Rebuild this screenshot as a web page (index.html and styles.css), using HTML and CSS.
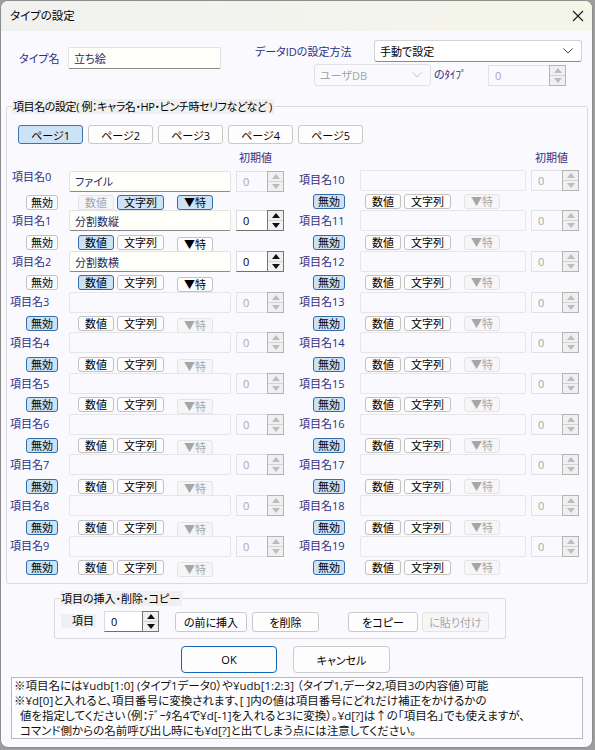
FILE: index.html
```html
<!doctype html>
<html>
    <head>
        <meta charset="utf-8">
        <link rel="stylesheet" href="styles.css">
    </head>
    <body>
    <div class="window">
        <div class="titlebar">
            <span class="title">タイプの設定</span>
            <svg class="close" width="12" height="12" viewBox="0 0 12 12"><path d="M1 1L11 11M11 1L1 11" stroke="#1a1a1a" stroke-width="1.1" fill="none"/></svg>
        </div>

        <div class="content">
            <div class="head1">
                <span class="lbl type-lbl">タイプ名</span>
                <input class="fld type-fld" type="text" value="立ち絵">
                <span class="lbl id-lbl">データIDの設定方法</span>
                <div class="select method"><span>手動で設定</span><svg width="10" height="6" viewBox="0 0 10 6"><path d="M0.5 0.5L5 5L9.5 0.5" stroke="#444" fill="none"/></svg></div>
            </div>
            <div class="head2">
                <div class="select db off"><span>ユーザDB</span><svg width="10" height="6" viewBox="0 0 10 6"><path d="M0.5 0.5L5 5L9.5 0.5" stroke="#c4c4c4" fill="none"/></svg></div>
                <span class="lbl kind-lbl">のﾀｲﾌﾟ</span>
                <div class="spin kind"><span class="val">0</span><span class="arr"><i class="up"></i><i class="dn"></i></span></div>
            </div>

            <div class="group items">
                <span class="legend">項目名の設定( 例：キャラ名・HP・ピンチ時セリフなどなど )</span>
                <div class="pages">
                    <button class="page on">ページ1</button>
                    <button class="page">ページ2</button>
                    <button class="page">ページ3</button>
                    <button class="page">ページ4</button>
                    <button class="page">ページ5</button>
                </div>
                <div class="cols">
                    <div class="col col-left">
                        <div class="init">初期値</div>

                        <div class="item first">
                            <span class="lbl name">項目名0</span>
                            <input class="fld" type="text" value="ファイル">
                            <div class="spin"><span class="val">0</span><span class="arr"><i class="up"></i><i class="dn"></i></span></div>
                            <div class="opts"><button class="btn">無効</button><button class="btn off">数値</button><button class="btn on">文字列</button><button class="btn on spec">▼特</button></div>
                        </div>
                        <div class="item">
                            <span class="lbl name">項目名1</span>
                            <input class="fld" type="text" value="分割数縦">
                            <div class="spin on"><span class="val">0</span><span class="arr"><i class="up"></i><i class="dn"></i></span></div>
                            <div class="opts"><button class="btn">無効</button><button class="btn on">数値</button><button class="btn">文字列</button><button class="btn spec">▼特</button></div>
                        </div>
                        <div class="item">
                            <span class="lbl name">項目名2</span>
                            <input class="fld" type="text" value="分割数横">
                            <div class="spin on"><span class="val">0</span><span class="arr"><i class="up"></i><i class="dn"></i></span></div>
                            <div class="opts"><button class="btn">無効</button><button class="btn on">数値</button><button class="btn">文字列</button><button class="btn spec">▼特</button></div>
                        </div>
                        <div class="item empty">
                            <span class="lbl name">項目名3</span>
                            <input class="fld" type="text" disabled>
                            <div class="spin"><span class="val">0</span><span class="arr"><i class="up"></i><i class="dn"></i></span></div>
                            <div class="opts"><button class="btn on">無効</button><button class="btn">数値</button><button class="btn">文字列</button><button class="btn off spec">▼特</button></div>
                        </div>
                        <div class="item empty">
                            <span class="lbl name">項目名4</span>
                            <input class="fld" type="text" disabled>
                            <div class="spin"><span class="val">0</span><span class="arr"><i class="up"></i><i class="dn"></i></span></div>
                            <div class="opts"><button class="btn on">無効</button><button class="btn">数値</button><button class="btn">文字列</button><button class="btn off spec">▼特</button></div>
                        </div>
                        <div class="item empty">
                            <span class="lbl name">項目名5</span>
                            <input class="fld" type="text" disabled>
                            <div class="spin"><span class="val">0</span><span class="arr"><i class="up"></i><i class="dn"></i></span></div>
                            <div class="opts"><button class="btn on">無効</button><button class="btn">数値</button><button class="btn">文字列</button><button class="btn off spec">▼特</button></div>
                        </div>
                        <div class="item empty">
                            <span class="lbl name">項目名6</span>
                            <input class="fld" type="text" disabled>
                            <div class="spin"><span class="val">0</span><span class="arr"><i class="up"></i><i class="dn"></i></span></div>
                            <div class="opts"><button class="btn on">無効</button><button class="btn">数値</button><button class="btn">文字列</button><button class="btn off spec">▼特</button></div>
                        </div>
                        <div class="item empty">
                            <span class="lbl name">項目名7</span>
                            <input class="fld" type="text" disabled>
                            <div class="spin"><span class="val">0</span><span class="arr"><i class="up"></i><i class="dn"></i></span></div>
                            <div class="opts"><button class="btn on">無効</button><button class="btn">数値</button><button class="btn">文字列</button><button class="btn off spec">▼特</button></div>
                        </div>
                        <div class="item empty">
                            <span class="lbl name">項目名8</span>
                            <input class="fld" type="text" disabled>
                            <div class="spin"><span class="val">0</span><span class="arr"><i class="up"></i><i class="dn"></i></span></div>
                            <div class="opts"><button class="btn on">無効</button><button class="btn">数値</button><button class="btn">文字列</button><button class="btn off spec">▼特</button></div>
                        </div>
                        <div class="item empty">
                            <span class="lbl name">項目名9</span>
                            <input class="fld" type="text" disabled>
                            <div class="spin"><span class="val">0</span><span class="arr"><i class="up"></i><i class="dn"></i></span></div>
                            <div class="opts"><button class="btn on">無効</button><button class="btn">数値</button><button class="btn">文字列</button><button class="btn off spec">▼特</button></div>
                        </div>
                    </div>

                    <div class="col col-right">
                        <div class="init">初期値</div>

                        <div class="item empty">
                            <span class="lbl name">項目名10</span>
                            <input class="fld" type="text" disabled>
                            <div class="spin"><span class="val">0</span><span class="arr"><i class="up"></i><i class="dn"></i></span></div>
                            <div class="opts"><button class="btn on">無効</button><button class="btn">数値</button><button class="btn">文字列</button><button class="btn off spec">▼特</button></div>
                        </div>
                        <div class="item empty">
                            <span class="lbl name">項目名11</span>
                            <input class="fld" type="text" disabled>
                            <div class="spin"><span class="val">0</span><span class="arr"><i class="up"></i><i class="dn"></i></span></div>
                            <div class="opts"><button class="btn on">無効</button><button class="btn">数値</button><button class="btn">文字列</button><button class="btn off spec">▼特</button></div>
                        </div>
                        <div class="item empty">
                            <span class="lbl name">項目名12</span>
                            <input class="fld" type="text" disabled>
                            <div class="spin"><span class="val">0</span><span class="arr"><i class="up"></i><i class="dn"></i></span></div>
                            <div class="opts"><button class="btn on">無効</button><button class="btn">数値</button><button class="btn">文字列</button><button class="btn off spec">▼特</button></div>
                        </div>
                        <div class="item empty">
                            <span class="lbl name">項目名13</span>
                            <input class="fld" type="text" disabled>
                            <div class="spin"><span class="val">0</span><span class="arr"><i class="up"></i><i class="dn"></i></span></div>
                            <div class="opts"><button class="btn on">無効</button><button class="btn">数値</button><button class="btn">文字列</button><button class="btn off spec">▼特</button></div>
                        </div>
                        <div class="item empty">
                            <span class="lbl name">項目名14</span>
                            <input class="fld" type="text" disabled>
                            <div class="spin"><span class="val">0</span><span class="arr"><i class="up"></i><i class="dn"></i></span></div>
                            <div class="opts"><button class="btn on">無効</button><button class="btn">数値</button><button class="btn">文字列</button><button class="btn off spec">▼特</button></div>
                        </div>
                        <div class="item empty">
                            <span class="lbl name">項目名15</span>
                            <input class="fld" type="text" disabled>
                            <div class="spin"><span class="val">0</span><span class="arr"><i class="up"></i><i class="dn"></i></span></div>
                            <div class="opts"><button class="btn on">無効</button><button class="btn">数値</button><button class="btn">文字列</button><button class="btn off spec">▼特</button></div>
                        </div>
                        <div class="item empty">
                            <span class="lbl name">項目名16</span>
                            <input class="fld" type="text" disabled>
                            <div class="spin"><span class="val">0</span><span class="arr"><i class="up"></i><i class="dn"></i></span></div>
                            <div class="opts"><button class="btn on">無効</button><button class="btn">数値</button><button class="btn">文字列</button><button class="btn off spec">▼特</button></div>
                        </div>
                        <div class="item empty">
                            <span class="lbl name">項目名17</span>
                            <input class="fld" type="text" disabled>
                            <div class="spin"><span class="val">0</span><span class="arr"><i class="up"></i><i class="dn"></i></span></div>
                            <div class="opts"><button class="btn on">無効</button><button class="btn">数値</button><button class="btn">文字列</button><button class="btn off spec">▼特</button></div>
                        </div>
                        <div class="item empty">
                            <span class="lbl name">項目名18</span>
                            <input class="fld" type="text" disabled>
                            <div class="spin"><span class="val">0</span><span class="arr"><i class="up"></i><i class="dn"></i></span></div>
                            <div class="opts"><button class="btn on">無効</button><button class="btn">数値</button><button class="btn">文字列</button><button class="btn off spec">▼特</button></div>
                        </div>
                        <div class="item empty">
                            <span class="lbl name">項目名19</span>
                            <input class="fld" type="text" disabled>
                            <div class="spin"><span class="val">0</span><span class="arr"><i class="up"></i><i class="dn"></i></span></div>
                            <div class="opts"><button class="btn on">無効</button><button class="btn">数値</button><button class="btn">文字列</button><button class="btn off spec">▼特</button></div>
                        </div>
                    </div>
                </div>
            </div>

            <div class="group edit">
                <span class="legend">項目の挿入・削除・コピー</span>
                <span class="edit-lbl">項目</span>
                <div class="spin on edit-spin"><span class="val">0</span><span class="arr"><i class="up"></i><i class="dn"></i></span></div>
                <button class="cmd insert">の前に挿入</button>
                <button class="cmd remove">を削除</button>
                <button class="cmd copy">をコピー</button>
                <button class="cmd paste off">に貼り付け</button>
            </div>

            <div class="actions">
                <button class="dlg ok">OK</button>
                <button class="dlg">キャンセル</button>
            </div>

            <div class="notes">
                <div>※項目名には¥udb[1:0] (タイプ1データ0）や¥udb[1:2:3] （タイプ1,データ2,項目3の内容値）可能</div>
                <div>※¥d[0]と入れると、項目番号に変換されます、[ ]内の値は項目番号にどれだけ補正をかけるかの</div>
                <div class="indent">値を指定してください（例：ﾃﾞｰﾀ名4で¥d[-1]を入れると3に変換）。¥d[?]は↑の「項目名」でも使えますが、</div>
                <div class="indent">コマンド側からの名前呼び出し時にも¥d[?]と出てしまう点には注意してください。</div>
            </div>
        </div>
    </div>
    </body>
</html>
```

FILE: styles.css
```css
* {
    box-sizing: border-box;
}

html, body {
    margin: 0;
}

body {
    background: #9d9d9d;
    font-family: "Open Sans", "Noto Sans CJK JP", sans-serif;
    font-size: 11px;
    font-feature-settings: "palt";
    color: #000;
}

button, input {
    font: inherit;
    font-feature-settings: inherit;
    color: inherit;
    margin: 0;
    padding: 0;
}

.window {
    width: 593px;
    height: 748px;
    border: 1px solid #8c8c8c;
    border-radius: 8px;
    background: #f9f9fe;
    overflow: hidden;
}

.titlebar {
    height: 30px;
    display: flex;
    align-items: center;
    justify-content: space-between;
    padding: 0 8px 0 9px;
    background: linear-gradient(to right, #f1f1f1, #f5f6ea);
}

.title {
    font-size: 11.5px;
    line-height: 16px;
}

.content {
    padding: 9px 0 0 5px;
}

.lbl {
    color: #2e2e84;
    line-height: 16px;
    white-space: nowrap;
}

/* text boxes */
.fld {
    height: 21px;
    border: 1px solid #e2e2e2;
    border-bottom-color: #8a8a8a;
    border-radius: 2px;
    background: #fffffa;
    padding: 0 5px;
    color: #262a62;
    outline: none;
}

.fld:disabled {
    background: #f9f9fe;
    border-color: #e6e6ea;
}

/* header rows */
.head1 {
    display: flex;
    height: 24px;
}

.type-lbl {
    width: 49px;
    margin: 11px 0 0 13px;
}

.type-fld {
    width: 153px;
    height: 22px;
    margin-top: 7px;
}

.id-lbl {
    width: 119px;
    margin: 4px 0 0 34px;
}

.select {
    display: flex;
    align-items: center;
    justify-content: space-between;
    height: 22px;
    padding: 0 8px 0 5px;
    border: 1px solid #d2d2d2;
    border-bottom-color: #8a8a8a;
    border-radius: 3px;
    background: #fff;
}

.method {
    width: 208px;
}

.select.off {
    color: #a4a4a4;
    background: #f9f9fe;
    border-color: #e2e2e6;
}

.head2 {
    display: flex;
    align-items: center;
    height: 22px;
}

.db {
    width: 117px;
    margin-left: 308px;
}

.kind-lbl {
    width: 54px;
    margin-left: 3px;
}

.spin.kind {
    width: 78px;
}

/* spin boxes */
.spin {
    display: flex;
    width: 48px;
    height: 21px;
}

.spin .val {
    flex: 1;
    border: 1px solid #e2e2e6;
    border-right: 0;
    padding-left: 6px;
    line-height: 19px;
    color: #a8a8a8;
    background: #f9f9fe;
}

.spin .arr {
    width: 17px;
    display: flex;
    flex-direction: column;
    border: 1px solid #b4b4b4;
    background: #f0f0f0;
}

.spin .arr i {
    flex: 1;
    display: flex;
    align-items: center;
    justify-content: center;
}

.spin .arr i + i {
    border-top: 1px solid #d4d4d4;
}

.spin .arr i::before {
    content: "";
    border-left: 4px solid transparent;
    border-right: 4px solid transparent;
}

.spin .up::before {
    border-bottom: 5px solid #bdbdbd;
}

.spin .dn::before {
    border-top: 5px solid #bdbdbd;
}

.spin.on .val {
    color: #000;
    background: #fff;
    border-color: #dcdcdc;
    border-bottom-color: #6e6e6e;
}

.spin.on .arr {
    border-color: #767676;
}

.spin.on .up::before {
    border-bottom-color: #111;
}

.spin.on .dn::before {
    border-top-color: #111;
}

/* item group */
.group {
    position: relative;
    border: 1px solid #dadade;
    border-radius: 2px;
}

.legend {
    position: absolute;
    top: -8px;
    left: 5px;
    padding: 0 2px 0 1px;
    line-height: 15px;
    background: #f0f0f0;
    white-space: nowrap;
}

.items {
    width: 582px;
    height: 478px;
    margin-top: 20px;
    padding-top: 18px;
}

.items .legend {
    letter-spacing: -0.4px;
}

.pages {
    display: flex;
    gap: 5px;
    padding-left: 11px;
}

.page {
    width: 65px;
    height: 19px;
    border: 1px solid #c9c9c9;
    border-radius: 3px;
    background: #fdfdfd;
}

.page.on {
    background: #cce2f6;
    border-color: #3a74ad;
}

.cols {
    display: flex;
    padding-left: 5px;
    margin-top: 7px;
}

.col-left {
    width: 287px;
}

.col-right {
    flex: 1;
}

.init {
    height: 18px;
    line-height: 14px;
    color: #2e2e84;
    padding-left: 227px;
}

.col-right .init {
    padding-left: 236px;
}

.item {
    display: flex;
    flex-wrap: wrap;
    align-items: center;
    height: 40.7px;
}

.name {
    width: 57px;
}

.item.first .name {
    margin-bottom: 8px;
}

.col-left .empty .name {
    margin-left: -2px;
    width: 59px;
}

.col-right .name {
    width: 61px;
}

.item .fld {
    width: 162px;
}

.col-right .item .fld {
    width: 166px;
}

.item .spin {
    margin-left: 5px;
}

.opts {
    flex-basis: 100%;
    display: flex;
    align-items: flex-start;
    height: 15px;
    margin-top: 2px;
    padding-left: 14px;
}

/* small toggle buttons under each item */
.btn {
    height: 15px;
    line-height: 13px;
    border: 1px solid #c2c2c2;
    border-radius: 3px;
    background: #fdfdfd;
    width: 36px;
}

.btn:first-child {
    width: 32px;
}

.btn:nth-child(2) {
    margin-left: 20px;
}

.btn:nth-child(3) {
    width: 47px;
    margin-left: 3px;
}

.btn.spec {
    margin-left: 13px;
}

.col-left .item + .item .spec {
    margin-top: 2px;
}

.btn.on {
    background: #cce2f6;
    border-color: #2f6ea8;
}

.btn.off {
    color: #a6a6a6;
    background: #f6f6f8;
    border-color: #e4e4e6;
}

/* insert / delete / copy */
.edit {
    display: flex;
    align-items: flex-start;
    width: 452px;
    height: 41px;
    margin: 14px 0 0 48px;
    padding: 12px 0 0 6px;
}

.edit-lbl {
    width: 35px;
    margin-top: 3px;
    line-height: 14px;
    text-align: right;
    padding-right: 2px;
    background: #f0f0f0;
}

.edit-spin {
    width: 55px;
    margin-left: 8px;
}

.cmd {
    height: 20px;
    margin-top: 1px;
    border: 1px solid #c9c9c9;
    border-radius: 3px;
    background: #fdfdfd;
}

.insert {
    width: 72px;
    margin-left: 16px;
}

.remove {
    width: 67px;
    margin-left: 5px;
}

.copy {
    width: 70px;
    margin-left: 29px;
}

.paste {
    width: 67px;
    margin-left: 4px;
}

.cmd.off {
    color: #a6a6a6;
    background: #f6f6f8;
    border-color: #e4e4e6;
}

/* OK / cancel */
.actions {
    display: flex;
    gap: 16px;
    margin: 7px 0 0 175px;
}

.dlg {
    width: 97px;
    height: 27px;
    border: 1px solid #cbcbcb;
    border-radius: 4px;
    background: #fdfdfd;
}

.dlg.ok {
    width: 96px;
    border-color: #1466b8;
}

.notes {
    width: 572px;
    height: 62px;
    margin: 4px 0 0 5px;
    padding-left: 2px;
    border: 1px solid #b9b9b9;
    background: #fdfdff;
    font-size: 11.5px;
    line-height: 15px;
    white-space: nowrap;
    color: #111;
}

.notes .indent {
    padding-left: 6px;
}
```
